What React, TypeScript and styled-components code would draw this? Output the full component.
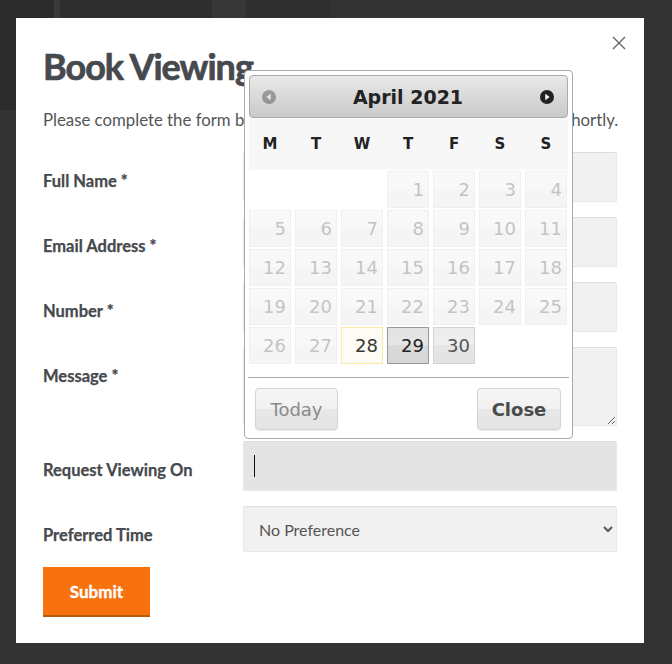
import React from "react";
import styled, { createGlobalStyle, css } from "styled-components";

const Global = createGlobalStyle`
  html, body { margin: 0; padding: 0; }
  body { background: #333; font-family: Lato, "Open Sans", sans-serif; }
`;

const Backdrop = styled.div`
  width: 672px;
  height: 664px;
  overflow: hidden;
  box-sizing: border-box;
  padding: 18px 28px 0 16px;
  background-color: #333;
  background-image: linear-gradient(
    90deg,
    #2b2b2b 0 54px,
    #3a3a3a 54px 60px,
    #2e2e2e 60px 212px,
    #373737 212px 246px,
    #2f2f2f 246px 330px,
    #333 330px
  );
  background-size: 100% 110px;
  background-repeat: no-repeat;
`;

const Modal = styled.div`
  position: relative;
  width: 628px;
  box-sizing: border-box;
  background: #fff;
  padding: 26px 27px 26px 27px;
`;

const CloseX = styled.button`
  position: absolute;
  right: 18px;
  top: 18px;
  width: 14px;
  height: 14px;
  padding: 0;
  border: none;
  background: none;
  display: flex;
  cursor: pointer;
`;

const Title = styled.h2`
  margin: 0;
  font: 700 36px/44px Lato, sans-serif;
  letter-spacing: -1px;
  -webkit-text-stroke: 0.7px #46494e;
  color: #46494e;
`;

const Intro = styled.p`
  margin: 20px 0 0;
  font: 400 16.8px/24px Lato, sans-serif;
  color: #555;
  white-space: nowrap;
`;

const Form = styled.form`
  margin-top: 20px;
  display: grid;
  grid-template-columns: 200px 374px;
  row-gap: 15px;
`;

const Label = styled.label`
  padding-top: 17px;
  font: 700 16.5px/24px Lato, sans-serif;
  -webkit-text-stroke: 0.25px #46494d;
  color: #46494d;
`;

const fieldBase = css`
  box-sizing: border-box;
  width: 100%;
  border: 1px solid #e8e8e8;
  border-top-color: #dddddd;
  border-radius: 2px;
  font: 400 16px Lato, sans-serif;
  color: #555;
  outline: none;
  margin: 0;
`;

const FieldWrap = styled.div`
  position: relative;
`;

const TextInput = styled.input<{ $focused?: boolean }>`
  ${fieldBase};
  display: block;
  height: 50px;
  padding: 0 10px;
  background: ${(p) => (p.$focused ? "#e4e4e4" : "#f1f1f1")};
`;

const Caret = styled.span`
  position: absolute;
  left: 11px;
  top: 14px;
  width: 1px;
  height: 22px;
  background: #111;
`;

const TextArea = styled.textarea`
  ${fieldBase};
  display: block;
  height: 79px;
  padding: 10px;
  background: #f1f1f1;
  resize: vertical;
`;

const Select = styled.select`
  ${fieldBase};
  display: block;
  height: 46px;
  padding: 0 6px 0 11px;
  background: #f1f1f1;
`;

const SubmitButton = styled.button`
  justify-self: start;
  width: 107px;
  height: 50px;
  border: none;
  border-bottom: 2px solid #b85a0c;
  background: #f7720e;
  color: #fff;
  font: 700 17px Lato, sans-serif;
  -webkit-text-stroke: 0.3px #fff;
  cursor: pointer;
`;

/* ---------- date picker ---------- */

const Picker = styled.div`
  position: absolute;
  left: 228px;
  top: 52px;
  width: 329px;
  box-sizing: border-box;
  padding: 4px;
  border: 1px solid #aaa;
  border-radius: 4px;
  background: #fff;
  font-family: "DejaVu Sans", Verdana, sans-serif;
`;

const PickerHeader = styled.div`
  height: 43px;
  box-sizing: border-box;
  border: 1px solid #aaa;
  border-radius: 4px;
  background: linear-gradient(#e9e9e9, #d6d6d6 60%, #c9c9c9);
  display: flex;
  align-items: center;
  padding: 0 13px 0 12px;
`;

const NavIcon = styled.span<{ $disabled?: boolean }>`
  display: flex;
  width: 14px;
  height: 14px;
  opacity: ${(p) => (p.$disabled ? 0.35 : 1)};
`;

const MonthTitle = styled.div`
  flex: 1;
  text-align: center;
  font-weight: 700;
  font-size: 19px;
  color: #222;
`;

const cols = css`
  display: grid;
  grid-template-columns: repeat(7, 42px);
  column-gap: 4px;
`;

const WeekRow = styled.div`
  ${cols};
  height: 52px;
  align-items: center;
  justify-items: center;
  background: #f7f7f7;
  font-weight: 700;
  font-size: 15px;
  color: #222;
`;

const DayGrid = styled.div`
  ${cols};
  margin-top: 1px;
  grid-auto-rows: 37px;
  row-gap: 2px;
`;

type DayKind = "empty" | "disabled" | "today" | "active" | "default";

const kindStyles: Record<DayKind, ReturnType<typeof css>> = {
  empty: css`
    border-color: transparent;
    background: transparent;
  `,
  disabled: css`
    border-color: #d3d3d3;
    background: linear-gradient(#efefef, #ececec 50%, #e6e6e6 50%, #e3e3e3);
    color: #555;
    opacity: 0.35;
  `,
  today: css`
    border-color: #f7e8a6;
    background: #fdfcf4;
    color: #363636;
  `,
  active: css`
    border-color: #999;
    background: linear-gradient(#e2e2e2, #e6e6e6 50%, #dadada 50%, #d6d6d6);
    color: #212121;
  `,
  default: css`
    border-color: #d3d3d3;
    background: linear-gradient(#ececec, #efefef 50%, #e6e6e6 50%, #e2e2e2);
    color: #555;
  `,
};

const DayCell = styled.div<{ $kind: DayKind }>`
  box-sizing: border-box;
  border: 1px solid transparent;
  text-align: right;
  padding: 1px 4px 0 0;
  font-size: 18px;
  line-height: 34px;
  ${(p) => kindStyles[p.$kind]};
`;

const Separator = styled.div`
  height: 1px;
  margin: 13px -1px 0;
  background: #aaa;
`;

const PickerFooter = styled.div`
  display: flex;
  justify-content: space-between;
  padding: 10px 7px 0 6px;
  margin-bottom: 4px;
`;

const PickerButton = styled.button<{ $primary?: boolean }>`
  height: 42px;
  box-sizing: border-box;
  width: ${(p) => (p.$primary ? "84px" : "83px")};
  padding: 0;
  border: 1px solid #d3d3d3;
  border-radius: 4px;
  background: linear-gradient(#f6f6f6, #f1f1f1 50%, #e8e8e8 50%, #e4e4e4);
  box-shadow: 0 1px 1px rgba(0, 0, 0, 0.08);
  font-family: "DejaVu Sans", Verdana, sans-serif;
  font-size: 18px;
  font-weight: ${(p) => (p.$primary ? 700 : 400)};
  color: ${(p) => (p.$primary ? "#4a4a4a" : "#8a8a8a")};
  cursor: pointer;
`;

const weekDays = ["M", "T", "W", "T", "F", "S", "S"];

type Day = { label: string; kind: DayKind };

const days: Day[] = [];
for (let i = 0; i < 3; i++) days.push({ label: "", kind: "empty" });
for (let d = 1; d <= 30; d++) {
  let kind: DayKind = "disabled";
  if (d === 28) kind = "today";
  else if (d === 29) kind = "active";
  else if (d === 30) kind = "default";
  days.push({ label: String(d), kind });
}
for (let i = 0; i < 2; i++) days.push({ label: "", kind: "empty" });

const CircleArrow = ({ dir, fill }: { dir: "prev" | "next"; fill: string }) => (
  <svg width="14" height="14" viewBox="0 0 14 14">
    <circle cx="7" cy="7" r="7" fill={fill} />
    {dir === "next" ? (
      <path d="M5.3 3.8 L9.6 7 L5.3 10.2 Z" fill="#fff" />
    ) : (
      <path d="M8.7 3.8 L4.4 7 L8.7 10.2 Z" fill="#fff" />
    )}
  </svg>
);

export default function App() {
  return (
    <>
      <Global />
      <Backdrop>
        <Modal>
          <CloseX aria-label="Close">
            <svg width="14" height="14" viewBox="0 0 14 14">
              <path d="M1 1 L13 13 M13 1 L1 13" stroke="#666" strokeWidth="1.4" fill="none" />
            </svg>
          </CloseX>
          <Title>Book Viewing</Title>
          <Intro>
            Please complete the form below and one of our team will call you back shortly.
          </Intro>
          <Form onSubmit={(e) => e.preventDefault()}>
            <Label>Full Name *</Label>
            <TextInput type="text" />
            <Label>Email Address *</Label>
            <TextInput type="email" />
            <Label>Number *</Label>
            <TextInput type="tel" />
            <Label>Message *</Label>
            <TextArea />
            <Label>Request Viewing On</Label>
            <FieldWrap>
              <TextInput type="text" $focused />
              <Caret />
            </FieldWrap>
            <Label>Preferred Time</Label>
            <Select defaultValue="none">
              <option value="none">No Preference</option>
              <option value="am">Morning</option>
              <option value="pm">Afternoon</option>
            </Select>
            <SubmitButton type="submit">Submit</SubmitButton>
          </Form>

          <Picker>
            <PickerHeader>
              <NavIcon $disabled>
                <CircleArrow dir="prev" fill="#222" />
              </NavIcon>
              <MonthTitle>April 2021</MonthTitle>
              <NavIcon>
                <CircleArrow dir="next" fill="#222" />
              </NavIcon>
            </PickerHeader>
            <WeekRow>
              {weekDays.map((w, i) => (
                <span key={i}>{w}</span>
              ))}
            </WeekRow>
            <DayGrid>
              {days.map((d, i) => (
                <DayCell key={i} $kind={d.kind}>
                  {d.label}
                </DayCell>
              ))}
            </DayGrid>
            <Separator />
            <PickerFooter>
              <PickerButton type="button">Today</PickerButton>
              <PickerButton type="button" $primary>
                Close
              </PickerButton>
            </PickerFooter>
          </Picker>
        </Modal>
      </Backdrop>
    </>
  );
}
